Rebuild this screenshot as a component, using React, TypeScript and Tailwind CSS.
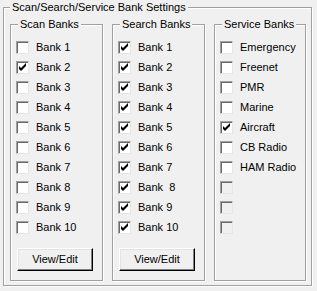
import React from "react";

type Item = { label: string; checked?: boolean; disabled?: boolean };

function Check({ checked, disabled }: { checked?: boolean; disabled?: boolean }) {
  return (
    <div
      className={
        "relative w-[13px] h-[13px] shrink-0 border border-t-[#a0a0a0] border-l-[#a0a0a0] border-r-[#e6e6e6] border-b-[#e6e6e6] shadow-[inset_1px_1px_0_#6a6a6a] " +
        (disabled ? "bg-[#f0f0f0]" : "bg-white")
      }
    >
      {checked && (
        <svg width="13" height="13" viewBox="0 0 13 13" className="absolute -left-[1px] -top-[1px]">
          <path d="M3 5 L5 7 L10 2 L10 5 L5 10 L3 8 Z" fill="#000" />
        </svg>
      )}
    </div>
  );
}

function Button() {
  return (
    <div className="ml-[6px] mt-[11px] w-[76px] h-[23px] flex items-center justify-center border border-t-white border-l-white border-r-black border-b-black shadow-[inset_-1px_-1px_0_#808080,inset_1px_1px_0_#e3e3e3] bg-[#f0f0f0] text-black">
      View/Edit
    </div>
  );
}

function Group({
  title,
  width,
  items,
  button,
}: {
  title: string;
  width: string;
  items: Item[];
  button?: boolean;
}) {
  return (
    <div
      className={
        "relative h-[257px] border border-[#a0a0a0] shadow-[inset_1px_1px_0_#fff,1px_1px_0_#fff] " + width
      }
    >
      <span className="absolute left-[7px] -top-[8px] h-[14px] leading-[14px] px-[2px] bg-[#f0f0f0] whitespace-pre">
        {title}
      </span>
      <div className="flex flex-col pl-[5px] pt-[12px]">
        {items.map((it, i) => (
          <div key={i} className="flex items-center h-[20px] gap-[7px]">
            <Check checked={it.checked} disabled={it.disabled} />
            <span className="whitespace-pre leading-[14px]">{it.label}</span>
          </div>
        ))}
      </div>
      {button && <Button />}
    </div>
  );
}

export default function App() {
  const scan: Item[] = Array.from({ length: 10 }, (_, i) => ({
    label: `Bank ${i + 1}`,
    checked: i === 1,
  }));
  const search: Item[] = Array.from({ length: 10 }, (_, i) => ({
    label: i === 7 ? "Bank  8" : `Bank ${i + 1}`,
    checked: true,
  }));
  const service: Item[] = [
    { label: "Emergency" },
    { label: "Freenet" },
    { label: "PMR" },
    { label: "Marine" },
    { label: "Aircraft", checked: true },
    { label: "CB Radio" },
    { label: "HAM Radio" },
    { label: "", disabled: true },
    { label: "", disabled: true },
    { label: "", disabled: true },
  ];
  return (
    <div className="w-[317px] h-[291px] bg-[#f0f0f0] pt-[7px] pl-[3px] text-[11px] text-black font-['Liberation_Sans',Arial,sans-serif]">
      <div className="relative w-[309px] h-[279px] border border-[#a0a0a0] shadow-[inset_1px_1px_0_#fff,1px_1px_0_#fff]">
        <span className="absolute left-[6px] -top-[8px] h-[14px] leading-[14px] px-[2px] bg-[#f0f0f0]">
          Scan/Search/Service Bank Settings
        </span>
        <div className="flex pl-[6px] pt-[16px] gap-[9px]">
          <Group title="Scan Banks" width="w-[93px]" items={scan} button />
          <Group title="Search Banks" width="w-[93px]" items={search} button />
          <Group title="Service Banks" width="w-[92px]" items={service} />
        </div>
      </div>
    </div>
  );
}
